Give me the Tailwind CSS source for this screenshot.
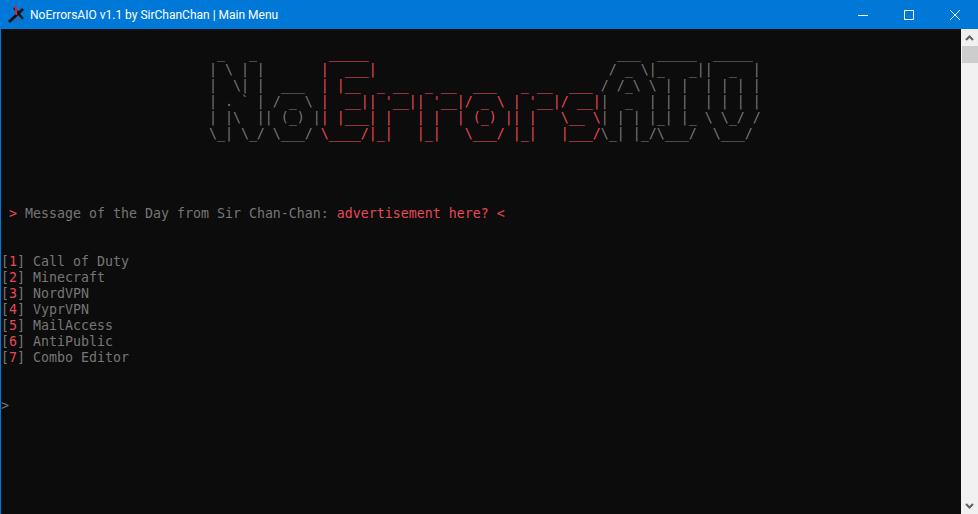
<!DOCTYPE html>
<html lang="en">
<head>
    <meta charset="UTF-8">
    <meta name="viewport" content="width=device-width, initial-scale=1.0">
    <title>NoErrorsAIO v1.1 by SirChanChan | Main Menu</title>
    <script src="https://cdn.jsdelivr.net/npm/@tailwindcss/browser@4"></script>
</head>
<body class="w-[978px] h-[514px] overflow-hidden bg-[#0c0c0c]">

    <!-- Title bar -->
    <header class="h-[29px] bg-[#0078d7] flex items-center text-white">
        <svg class="ml-[8px] mr-[5px] w-[17px] h-[17px]" viewBox="0 0 17 17" fill="none">
            <path d="M1 16 L15 3" stroke="#111" stroke-width="2.8"/>
            <path d="M6 2 L15 13" stroke="#111" stroke-width="2.2"/>
            <path d="M7.5 0 L8.5 9" stroke="#e0202c" stroke-width="2"/>
            <path d="M7.5 13 h2 v2 h-2 z" fill="#e0202c"/>
        </svg>
        <span class="font-['Roboto'] text-[12px] leading-[16px]">NoErrorsAIO v1.1 by SirChanChan | Main Menu</span>
        <div class="ml-auto flex h-full">
            <button class="w-[46px] h-full flex items-center justify-center">
                <svg width="10" height="10" viewBox="0 0 10 10"><path d="M0 5.5 H10" stroke="#fff"/></svg>
            </button>
            <button class="w-[46px] h-full flex items-center justify-center">
                <svg width="10" height="10" viewBox="0 0 10 10"><path d="M.5 .5 H9.5 V9.5 H.5 Z" stroke="#fff" fill="none"/></svg>
            </button>
            <button class="w-[46px] h-full flex items-center justify-center">
                <svg width="10" height="10" viewBox="0 0 10 10"><path d="M0 0 L10 10 M10 0 L0 10" stroke="#fff"/></svg>
            </button>
        </div>
    </header>

    <div class="flex h-[485px]">
        <!-- Console output -->
        <main class="flex-1 border-l border-[#0078d7] font-['DejaVu_Sans_Mono'] text-[13.29px] leading-[16px] text-[#767676]">
            <div class="h-[17px]"></div>
            <div class="whitespace-pre">                           _   _        <span class="text-[#e74856]"> _____                             </span>  ___  _____  _____ </div>
            <div class="whitespace-pre">                          | \ | |       <span class="text-[#e74856]">|  ___|                            </span> / _ \|_   _||  _  |</div>
            <div class="whitespace-pre">                          |  \| |  ___  <span class="text-[#e74856]">| |__  _ __  _ __  ___   _ __  ___ </span>/ /_\ \ | |  | | | |</div>
            <div class="whitespace-pre">                          | . ` | / _ \ <span class="text-[#e74856]">|  __|| '__|| '__|/ _ \ | '__|/ __|</span>|  _  | | |  | | | |</div>
            <div class="whitespace-pre">                          | |\  || (_) |<span class="text-[#e74856]">| |___| |   | |  | (_) || |   \__ \</span>| | | |_| |_ \ \_/ /</div>
            <div class="whitespace-pre">                          \_| \_/ \___/ <span class="text-[#e74856]">\____/|_|   |_|   \___/ |_|   |___/</span>\_| |_/\___/  \___/ </div>
            <div class="h-[64px]"></div>
            <div class="whitespace-pre"> <span class="text-[#e74856]">&gt;</span> Message of the Day from Sir Chan-Chan: <span class="text-[#e74856]">advertisement here? &lt;</span></div>
            <div class="h-[32px]"></div>
            <ul>
                <li class="whitespace-pre">[<span class="text-[#e74856]">1</span>] Call of Duty</li>
                <li class="whitespace-pre">[<span class="text-[#e74856]">2</span>] Minecraft</li>
                <li class="whitespace-pre">[<span class="text-[#e74856]">3</span>] NordVPN</li>
                <li class="whitespace-pre">[<span class="text-[#e74856]">4</span>] VyprVPN</li>
                <li class="whitespace-pre">[<span class="text-[#e74856]">5</span>] MailAccess</li>
                <li class="whitespace-pre">[<span class="text-[#e74856]">6</span>] AntiPublic</li>
                <li class="whitespace-pre">[<span class="text-[#e74856]">7</span>] Combo Editor</li>
            </ul>
            <div class="h-[32px]"></div>
            <div>&gt;</div>
        </main>

        <!-- Scrollbar -->
        <aside class="w-[17px] bg-[#f0f0f0] flex flex-col">
            <div class="h-[17px] flex items-center justify-center">
                <svg width="9" height="6" viewBox="0 0 9 6"><path d="M1 5 L4.5 1.5 L8 5" stroke="#606060" stroke-width="2" fill="none"/></svg>
            </div>
            <div class="h-[17px] ml-px bg-[#cdcdcd]"></div>
            <div class="mt-auto h-[17px] flex items-center justify-center">
                <svg width="9" height="6" viewBox="0 0 9 6"><path d="M1 1 L4.5 4.5 L8 1" stroke="#606060" stroke-width="2" fill="none"/></svg>
            </div>
        </aside>
    </div>

</body>
</html>
